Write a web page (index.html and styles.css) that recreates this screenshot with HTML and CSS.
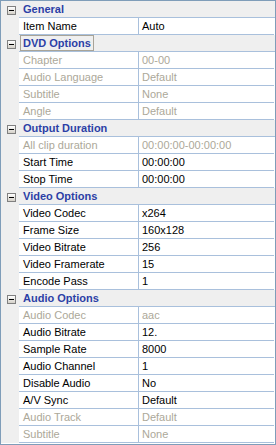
FILE: index.html
```html
<!DOCTYPE html>
<html lang="en">
<head>
    <meta charset="UTF-8">
    <title>Properties</title>
    <link rel="stylesheet" href="styles.css">
</head>
<body>
<div class="grid">
    <div class="row group">
        <span class="gutter"><span class="toggle"></span></span>
        <span class="title">General</span>
    </div>
    <div class="row"><span class="gutter"></span><span class="name">Item Name</span><span class="value">Auto</span></div>

    <div class="row group">
        <span class="gutter"><span class="toggle"></span></span>
        <span class="title"><span class="focus">DVD Options</span></span>
    </div>
    <div class="row off"><span class="gutter"></span><span class="name">Chapter</span><span class="value">00-00</span></div>
    <div class="row off"><span class="gutter"></span><span class="name">Audio Language</span><span class="value">Default</span></div>
    <div class="row off"><span class="gutter"></span><span class="name">Subtitle</span><span class="value">None</span></div>
    <div class="row off"><span class="gutter"></span><span class="name">Angle</span><span class="value">Default</span></div>

    <div class="row group">
        <span class="gutter"><span class="toggle"></span></span>
        <span class="title">Output Duration</span>
    </div>
    <div class="row off"><span class="gutter"></span><span class="name">All clip duration</span><span class="value">00:00:00-00:00:00</span></div>
    <div class="row"><span class="gutter"></span><span class="name">Start Time</span><span class="value">00:00:00</span></div>
    <div class="row"><span class="gutter"></span><span class="name">Stop Time</span><span class="value">00:00:00</span></div>

    <div class="row group">
        <span class="gutter"><span class="toggle"></span></span>
        <span class="title">Video Options</span>
    </div>
    <div class="row"><span class="gutter"></span><span class="name">Video Codec</span><span class="value">x264</span></div>
    <div class="row"><span class="gutter"></span><span class="name">Frame Size</span><span class="value">160x128</span></div>
    <div class="row"><span class="gutter"></span><span class="name">Video Bitrate</span><span class="value">256</span></div>
    <div class="row"><span class="gutter"></span><span class="name">Video Framerate</span><span class="value">15</span></div>
    <div class="row"><span class="gutter"></span><span class="name">Encode Pass</span><span class="value">1</span></div>

    <div class="row group">
        <span class="gutter"><span class="toggle"></span></span>
        <span class="title">Audio Options</span>
    </div>
    <div class="row off"><span class="gutter"></span><span class="name">Audio Codec</span><span class="value">aac</span></div>
    <div class="row"><span class="gutter"></span><span class="name">Audio Bitrate</span><span class="value">12.</span></div>
    <div class="row"><span class="gutter"></span><span class="name">Sample Rate</span><span class="value">8000</span></div>
    <div class="row"><span class="gutter"></span><span class="name">Audio Channel</span><span class="value">1</span></div>
    <div class="row"><span class="gutter"></span><span class="name">Disable Audio</span><span class="value">No</span></div>
    <div class="row"><span class="gutter"></span><span class="name">A/V Sync</span><span class="value">Default</span></div>
    <div class="row off"><span class="gutter"></span><span class="name">Audio Track</span><span class="value">Default</span></div>
    <div class="row off"><span class="gutter"></span><span class="name">Subtitle</span><span class="value">None</span></div>
</div>
</body>
</html>
```

FILE: styles.css
```css
body {
    margin: 0;
    font-family: "Liberation Sans", Arial, sans-serif;
    font-size: 11px;
    background: #fff;
}
.grid {
    width: 276px;
    height: 445px;
    box-sizing: border-box;
    border: 1px solid #7f9db9;
    background: #fff;
    overflow: hidden;
}
.row {
    display: flex;
    height: 17px;
    color: #000;
}
.gutter {
    flex: 0 0 18px;
    box-sizing: border-box;
    padding-left: 6px;
    background: #efefef;
    display: flex;
    align-items: flex-start;
}
.name,
.value,
.title {
    box-sizing: border-box;
    height: 17px;
    line-height: 16px;
    border-bottom: 1px solid #a9c0dc;
    white-space: nowrap;
    overflow: hidden;
}
.name {
    flex: 0 0 120px;
    padding-left: 4px;
    border-right: 1px solid #a9c0dc;
}
.value {
    flex: 1;
    padding-left: 3px;
    margin-right: 1px;
}
.off .name,
.off .value {
    color: #aca899;
}
.group .title {
    flex: 1;
    background: #efefef;
    padding-left: 4px;
    font-weight: bold;
    color: #2c3fa6;
}
.focus {
    display: inline-block;
    margin-left: -3px;
    padding: 0 2px;
    height: 14px;
    line-height: 14px;
    border: 1px solid #a8a498;
}
.toggle {
    position: relative;
    width: 7px;
    height: 7px;
    margin-top: 5px;
    border: 1px solid #808080;
    background: linear-gradient(#ffffff, #d4d0c8);
}
.toggle::after {
    content: "";
    position: absolute;
    left: 1px;
    top: 3px;
    width: 5px;
    height: 1px;
    background: #000;
}
```
